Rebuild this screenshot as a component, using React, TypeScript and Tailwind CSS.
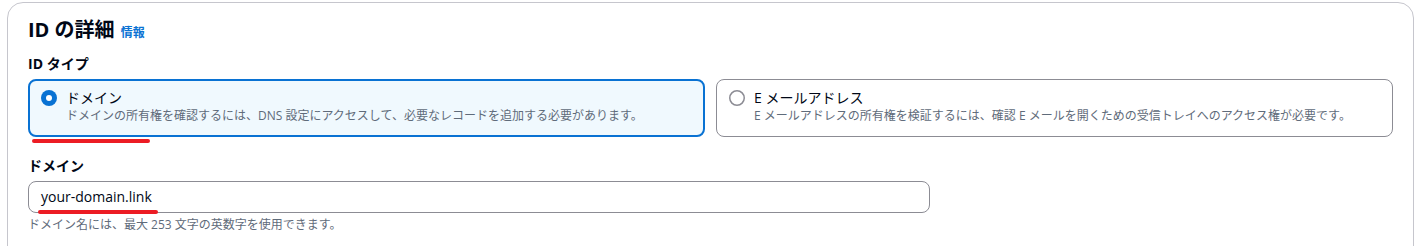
import React from 'react';

const font = { fontFamily: '"Open Sans", "Noto Sans CJK JP", sans-serif' };

interface TileProps {
  label: string;
  description: string;
  selected?: boolean;
  underline?: boolean;
}

const RadioTile: React.FC<TileProps> = ({ label, description, selected, underline }) => (
  <div
    className={
      selected
        ? 'relative h-[58px] rounded-lg border-2 border-[#0972d3] bg-[#f0f9fe] pl-[11px] pr-3 pt-[7px]'
        : 'relative h-[58px] rounded-lg border border-[#8c8c94] bg-white pl-3 pr-3 pt-2'
    }
  >
    <div className="flex items-start gap-[9px]">
      <svg width="16" height="16" viewBox="0 0 16 16" className="mt-[2px] shrink-0">
        {selected ? (
          <>
            <circle cx="8" cy="8" r="8" fill="#0972d3" />
            <circle cx="8" cy="8" r="3" fill="#ffffff" />
          </>
        ) : (
          <circle cx="8" cy="8" r="7.25" fill="#ffffff" stroke="#8c8c94" strokeWidth="1.5" />
        )}
      </svg>
      <div>
        <div className="text-[14px] leading-[20px] text-[#000716]">{label}</div>
        <div className="text-[12px] leading-[16px] text-[#5f6b7a]">{description}</div>
      </div>
    </div>
    {underline && (
      <div className="absolute left-[2px] top-[58px] h-[4px] w-[118px] rounded-full bg-[#ec1c24]" />
    )}
  </div>
);

const App: React.FC = () => {
  return (
    <div className="h-[246px] overflow-hidden bg-white pt-[2px]" style={font}>
      <div className="ml-[7px] w-[1407px] h-[300px] rounded-[16px] border border-[#c6c6cd] bg-white px-5 pt-[15px]">
        <div className="flex items-baseline gap-[6px] h-[24px]">
          <h2 className="text-[20px] leading-[24px] font-bold text-[#000716]">ID の詳細</h2>
          <a href="#" className="text-[12px] leading-[16px] font-bold text-[#0972d3]">情報</a>
        </div>

        <div className="mt-[11px] text-[14px] leading-[22px] font-bold text-[#000716]">ID タイプ</div>
        <div className="mt-[4px] grid grid-cols-2 gap-[11px]">
          <RadioTile
            selected
            underline
            label="ドメイン"
            description="ドメインの所有権を確認するには、DNS 設定にアクセスして、必要なレコードを追加する必要があります。"
          />
          <RadioTile
            label="E メールアドレス"
            description="E メールアドレスの所有権を検証するには、確認 E メールを開くための受信トレイへのアクセス権が必要です。"
          />
        </div>

        <div className="mt-[18px] text-[14px] leading-[22px] font-bold text-[#000716]">ドメイン</div>
        <div className="relative mt-[4px] h-[32px] w-[902px] rounded-lg border border-[#8c8c94] bg-white px-3 flex items-center">
          <span className="text-[14px] leading-[22px] text-[#000716]">your-domain.link</span>
          <div className="absolute left-[9px] top-[28px] h-[4px] w-[120px] rounded-full bg-[#ec1c24]" />
        </div>
        <div className="mt-[4px] text-[12px] leading-[16px] text-[#5f6b7a]">
          ドメイン名には、最大 253 文字の英数字を使用できます。
        </div>
      </div>
    </div>
  );
};

export default App;
